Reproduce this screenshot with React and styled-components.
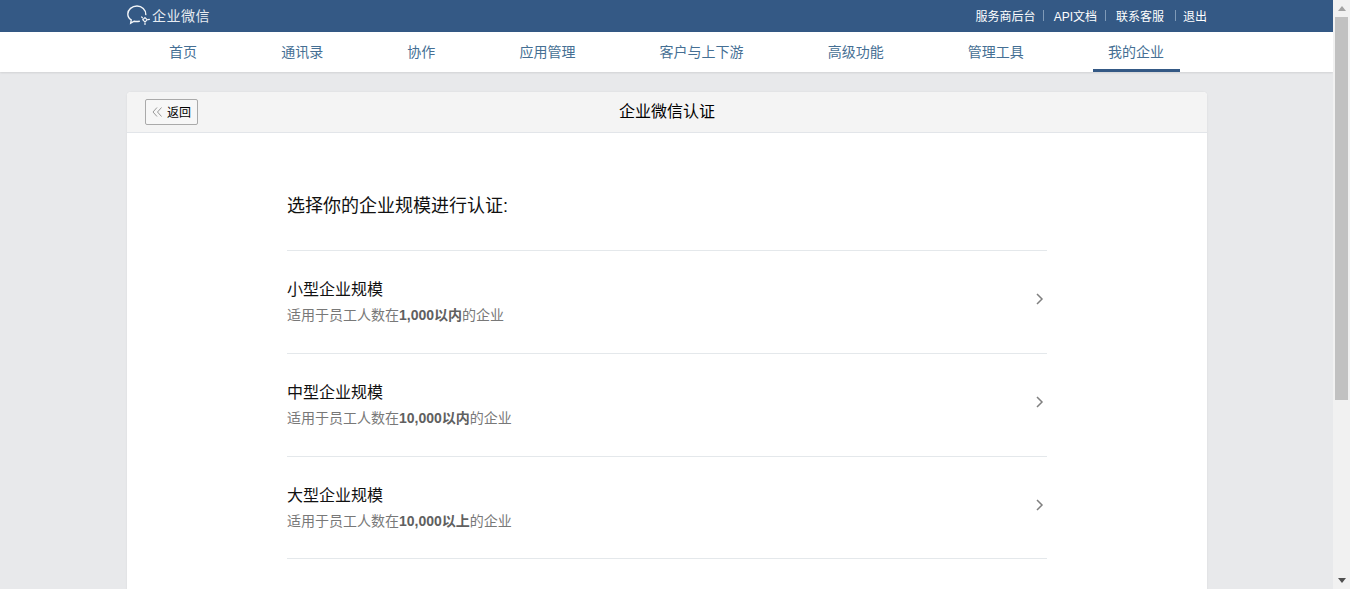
import React from 'react'
import styled, { createGlobalStyle } from 'styled-components'

const GlobalStyle = createGlobalStyle`
  html, body {
    height: 100%;
    overflow: hidden;
  }
  body {
    margin: 0;
    background: #e8e9eb;
    font-family: Arial, "Liberation Sans", "Noto Sans CJK SC", sans-serif;
    font-size: 14px;
    color: #000;
  }
`

const Shell = styled.div`
  display: flex;
  height: 100vh;
  overflow: hidden;
`

const Page = styled.div`
  flex: 1;
  min-width: 0;
  overflow: hidden;
`

const ScrollBar = styled.div`
  flex: 0 0 17px;
  display: flex;
  flex-direction: column;
  background: #f1f1f1;
`

const ScrollButton = styled.div`
  flex: 0 0 17px;
  display: flex;
  align-items: center;
  justify-content: center;
`

const ScrollTrack = styled.div`
  flex: 1;
  padding: 0 2px;
`

const ScrollThumb = styled.div`
  height: 383px;
  background: #c1c1c1;
`

const TopBar = styled.header`
  height: 32px;
  background: #345985;
`

const Wrap = styled.div`
  width: 1080px;
  margin-left: 127px;
`

const TopInner = styled(Wrap)`
  display: flex;
  align-items: center;
  justify-content: space-between;
  height: 30px;
`

const Brand = styled.div`
  display: flex;
  align-items: center;
  gap: 2px;
  color: #e6ebf1;
  font-size: 14px;
  letter-spacing: 0.5px;
`

const TopLinks = styled.nav`
  display: flex;
  align-items: center;
  font-size: 12px;
  color: #fff;
`

const Sep = styled.span`
  width: 1px;
  height: 11px;
  background: #7f9ab8;
  margin: 0 ${p => p.$right}px 0 ${p => p.$left}px;
`

const NavBar = styled.nav`
  height: 40px;
  background: #fff;
  box-shadow: 0 1px 2px rgba(0, 0, 0, 0.1);
`

const NavInner = styled(Wrap)`
  display: flex;
  padding-left: 27px;
  box-sizing: border-box;
`

const NavItem = styled.a`
  flex: none;
  height: 40px;
  box-sizing: border-box;
  line-height: 40px;
  padding: 0 ${p => (p.$active ? 16 : 15)}px 0 15px;
  margin-right: 54.15px;
  font-size: 14px;
  white-space: nowrap;
  color: #456f94;
  border-bottom: ${p => (p.$active ? '3px solid #345985' : '0')};
`

const Card = styled(Wrap)`
  margin-top: 20px;
  background: #fff;
  border-radius: 4px 4px 0 0;
  box-shadow: 0 0 2px rgba(0, 0, 0, 0.08);
  height: 700px;
`

const CardHead = styled.div`
  position: relative;
  height: 41px;
  padding-bottom: 4px;
  box-sizing: border-box;
  background: #f4f4f4;
  border-bottom: 1px solid #e2e5e9;
  border-radius: 4px 4px 0 0;
  display: flex;
  align-items: center;
  justify-content: center;
  font-size: 16px;
`

const BackButton = styled.button`
  position: absolute;
  left: 18px;
  top: 7px;
  width: 53px;
  height: 26px;
  padding: 0 0 2px 6px;
  box-sizing: border-box;
  display: flex;
  align-items: center;
  gap: 4px;
  background: #f7f7f7;
  border: 1px solid #aaa;
  border-radius: 2px;
  font: inherit;
  font-size: 12px;
  color: #000;
`

const BackIcon = styled.svg`
  margin-top: 2px;
`

const Body = styled.div`
  width: 760px;
  margin: 0 auto;
  padding-top: 60px;
`

const Heading = styled.h2`
  margin: 0;
  height: 57px;
  line-height: 26px;
  font-size: 18px;
  font-weight: 400;
  color: #111;
  border-bottom: 1px solid #e4e8eb;
`

const Row = styled.div`
  display: flex;
  align-items: center;
  justify-content: space-between;
  height: 102px;
  border-bottom: 1px solid #e4e8eb;
  padding-right: 3px;

  &:last-child {
    height: 101px;
  }
`

const RowTitle = styled.div`
  font-size: 16px;
  line-height: 22px;
  color: #111;
`

const RowDesc = styled.div`
  margin-top: 4px;
  font-size: 14px;
  line-height: 20px;
  color: #787878;

  b {
    color: #606060;
  }
`

const ChevronIcon = styled.svg`
  margin-bottom: 6px;
`

const ChatLogo = () => (
  <svg width="23" height="20" viewBox="0 0 23 20" fill="none" stroke="#f2f5f8" strokeWidth="1.4">
    <path d="M18.8 9.6C19 4.6 14.8 1 10 1 5 1 .8 4.6.8 9c0 2.5 1.3 4.6 3.4 5.9l-.5 3.3 3.4-2c1 .2 2 .3 3 .3.8 0 1.5-.1 2.2-.2" strokeLinecap="round" />
    <path d="M18 12.6l2.2 2.2-2.2 2.2-2.2-2.2z" strokeWidth="1.2" />
    <path d="M21 14.6l1.4-.3M18 18l0 1.4M15.5 12.8l-.8-.8" strokeWidth="1.2" strokeLinecap="round" />
  </svg>
)

const DoubleLeft = () => (
  <BackIcon width="11" height="10" viewBox="0 0 11 10" fill="none" stroke="#999" strokeWidth="1">
    <path d="M5 .5L1 5l4 4.5M9.5.5L5.5 5l4 4.5" />
  </BackIcon>
)

const Chevron = () => (
  <ChevronIcon width="8" height="12" viewBox="0 0 8 12" fill="none" stroke="#808080" strokeWidth="1.5">
    <path d="M1 1l5 5-5 5" />
  </ChevronIcon>
)

const navItems = ['首页', '通讯录', '协作', '应用管理', '客户与上下游', '高级功能', '管理工具', '我的企业']

const sizes = [
  { title: '小型企业规模', limit: '1,000以内' },
  { title: '中型企业规模', limit: '10,000以内' },
  { title: '大型企业规模', limit: '10,000以上' },
]

export default function App() {
  return (
    <Shell>
      <GlobalStyle />
      <Page>
        <TopBar>
          <TopInner>
            <Brand>
              <ChatLogo />
              企业微信
            </Brand>
            <TopLinks>
              <a>服务商后台</a>
              <Sep $left={7} $right={10} />
              <a>API文档</a>
              <Sep $left={8} $right={10} />
              <a>联系客服</a>
              <Sep $left={11} $right={7} />
              <a>退出</a>
            </TopLinks>
          </TopInner>
        </TopBar>
        <NavBar>
          <NavInner>
            {navItems.map(item => (
              <NavItem key={item} $active={item === '我的企业'}>{item}</NavItem>
            ))}
          </NavInner>
        </NavBar>
        <Card>
          <CardHead>
            <BackButton><DoubleLeft />返回</BackButton>
            企业微信认证
          </CardHead>
          <Body>
            <Heading>选择你的企业规模进行认证:</Heading>
            {sizes.map(size => (
              <Row key={size.title}>
                <div>
                  <RowTitle>{size.title}</RowTitle>
                  <RowDesc>适用于员工人数在<b>{size.limit}</b>的企业</RowDesc>
                </div>
                <Chevron />
              </Row>
            ))}
          </Body>
        </Card>
      </Page>
      <ScrollBar>
        <ScrollButton>
          <svg width="8" height="5" viewBox="0 0 8 5"><path d="M4 0l4 5H0z" fill="#a3a3a3" /></svg>
        </ScrollButton>
        <ScrollTrack>
          <ScrollThumb />
        </ScrollTrack>
        <ScrollButton>
          <svg width="8" height="5" viewBox="0 0 8 5"><path d="M0 0h8L4 5z" fill="#505050" /></svg>
        </ScrollButton>
      </ScrollBar>
    </Shell>
  )
}
